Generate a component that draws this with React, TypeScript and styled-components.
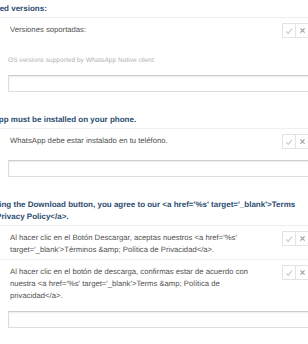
import React from "react";
import styled, { createGlobalStyle } from "styled-components";

const GlobalStyle = createGlobalStyle`
  html, body {
    margin: 0;
    padding: 0;
    background: #ffffff;
    overflow: hidden;
  }
  body {
    font-family: "Liberation Sans", Arial, sans-serif;
    text-rendering: geometricPrecision;
  }
`;

// the view is scrolled a little to the right, so the page starts left of the window
const Page = styled.div`
  width: 345px;
  margin-left: -31px;
  padding-top: 3px;
`;

const Section = styled.section`
  & + & {
    margin-top: 22px;
  }
`;

const Heading = styled.h3`
  margin: 0 0 2px;
  font-size: 8px;
  line-height: 12px;
  font-weight: 700;
  color: #2b4c6f;
`;

const Row = styled.div`
  display: flex;
  align-items: flex-start;
  padding: 5px 4px 3px 41px;
  border-top: 1px solid #eeeeee;
`;

const RowText = styled.div`
  flex: 1;
  margin-top: 1px;
  font-size: 7.7px;
  line-height: 12px;
  color: #505050;
`;

const Actions = styled.div`
  display: flex;
  flex-shrink: 0;
  margin-left: 10px;
`;

const ActionButton = styled.button<{ $tone: string }>`
  width: 14px;
  height: 15px;
  padding: 0;
  display: flex;
  align-items: center;
  justify-content: center;
  background: #ffffff;
  border: 1px solid #e3e3e3;
  color: ${(p) => p.$tone};
  & + & {
    border-left: none;
  }
`;

const Hint = styled.div`
  margin: 15px 0 0 39px;
  font-size: 6.6px;
  line-height: 10px;
  color: #b3b3b3;
`;

const Field = styled.div<{ $gap: number }>`
  margin: ${(p) => p.$gap}px 0 0 39px;
  height: 17px;
  box-sizing: border-box;
  border: 1px solid #dddddd;
  border-top-color: #cccccc;
  box-shadow: inset 0 1px 2px rgba(0, 0, 0, 0.08);
  background: #ffffff;
`;

const Check = () => (
  <svg width="8" height="8" viewBox="0 0 10 10">
    <path d="M1.5 5.5 L4 8 L8.8 2" fill="none" stroke="currentColor" strokeWidth="1.4" />
  </svg>
);

const Cross = () => (
  <svg width="7" height="7" viewBox="0 0 10 10">
    <path d="M2 2 L8 8 M8 2 L2 8" fill="none" stroke="currentColor" strokeWidth="1.5" />
  </svg>
);

const TranslationRow = ({ text }: { text: string }) => (
  <Row>
    <RowText>{text}</RowText>
    <Actions>
      <ActionButton $tone="#c9c9c9">
        <Check />
      </ActionButton>
      <ActionButton $tone="#9c9c9c">
        <Cross />
      </ActionButton>
    </Actions>
  </Row>
);

export default function App() {
  return (
    <>
      <GlobalStyle />
      <Page>
        <Section>
          <Heading>Supported versions:</Heading>
          <TranslationRow text={"Versiones soportadas:"} />
          <Hint>OS versions supported by WhatsApp Native client</Hint>
          <Field $gap={9} />
        </Section>

        <Section>
          <Heading>WhatsApp must be installed on your phone.</Heading>
          <TranslationRow text={"WhatsApp debe estar instalado en tu teléfono."} />
          <Field $gap={8} />
        </Section>

        <Section>
          <Heading>
            {
              "By clicking the Download button, you agree to our <a href='%s' target='_blank'>Terms &amp; Privacy Policy</a>."
            }
          </Heading>
          <TranslationRow
            text={
              "Al hacer clic en el Botón Descargar, aceptas nuestros <a href='%s' target='_blank'>Términos &amp; Política de Privacidad</a>."
            }
          />
          <TranslationRow
            text={
              "Al hacer clic en el botón de descarga, confirmas estar de acuerdo con nuestra <a href='%s' target='_blank'>Terms &amp; Política de privacidad</a>."
            }
          />
          <Field $gap={6} />
        </Section>
      </Page>
    </>
  );
}
